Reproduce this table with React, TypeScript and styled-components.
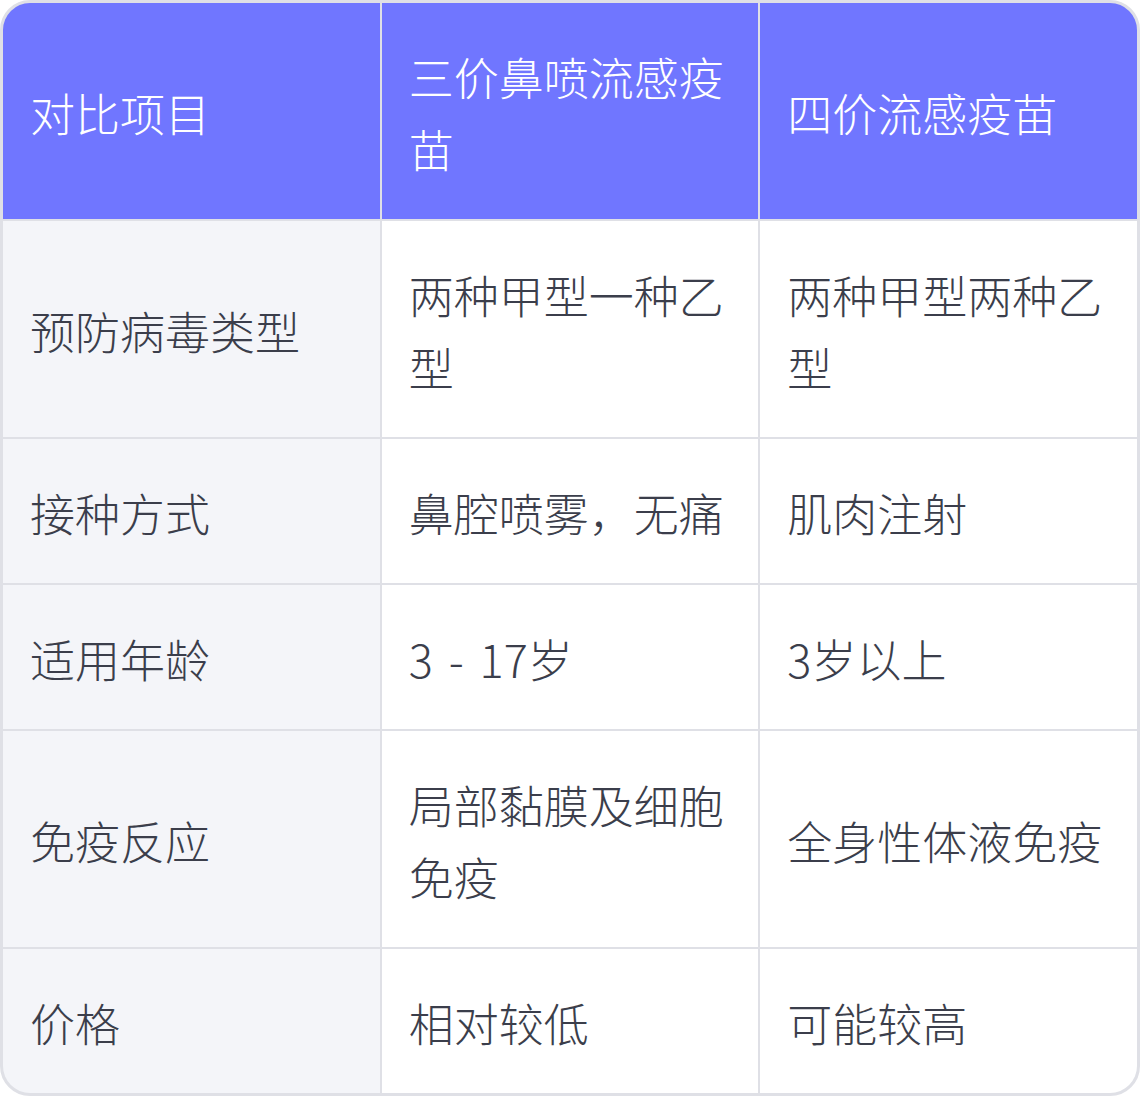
import { Fragment } from 'react';
import styled, { createGlobalStyle } from 'styled-components';

const GlobalStyle = createGlobalStyle`
  html, body {
    margin: 0;
    padding: 0;
    background: #ffffff;
  }
  body {
    font-family: "Noto Sans CJK SC", "Noto Sans", sans-serif;
  }
`;

const Table = styled.div`
  width: 1140px;
  box-sizing: border-box;
  display: grid;
  grid-template-columns: 1fr 1fr 1fr;
  gap: 2px;
  background: #dfe0e6;
  border: 3px solid #dfe0e6;
  border-radius: 30px;
  overflow: hidden;
`;

const Cell = styled.div<{ $head?: boolean; $label?: boolean }>`
  padding: 38px 27px 34px;
  font-size: 45px;
  line-height: 72px;
  font-weight: 200;
  word-spacing: 6px;
  display: flex;
  align-items: center;
  background: ${p => (p.$head ? '#7076ff' : p.$label ? '#f4f5f9' : '#ffffff')};
  color: ${p => (p.$head ? '#ffffff' : '#3b3e4b')};
`;

const headers = ['对比项目', '三价鼻喷流感疫苗', '四价流感疫苗'];

const rows: [string, string, string][] = [
  ['预防病毒类型', '两种甲型一种乙型', '两种甲型两种乙型'],
  ['接种方式', '鼻腔喷雾，无痛', '肌肉注射'],
  ['适用年龄', '3 - 17岁', '3岁以上'],
  ['免疫反应', '局部黏膜及细胞免疫', '全身性体液免疫'],
  ['价格', '相对较低', '可能较高'],
];

export default function App() {
  return (
    <>
      <GlobalStyle />
      <Table>
        {headers.map(h => (
          <Cell key={h} $head>{h}</Cell>
        ))}
        {rows.map(r => (
          <Fragment key={r[0]}>
            <Cell $label>{r[0]}</Cell>
            <Cell>{r[1]}</Cell>
            <Cell>{r[2]}</Cell>
          </Fragment>
        ))}
      </Table>
    </>
  );
}
